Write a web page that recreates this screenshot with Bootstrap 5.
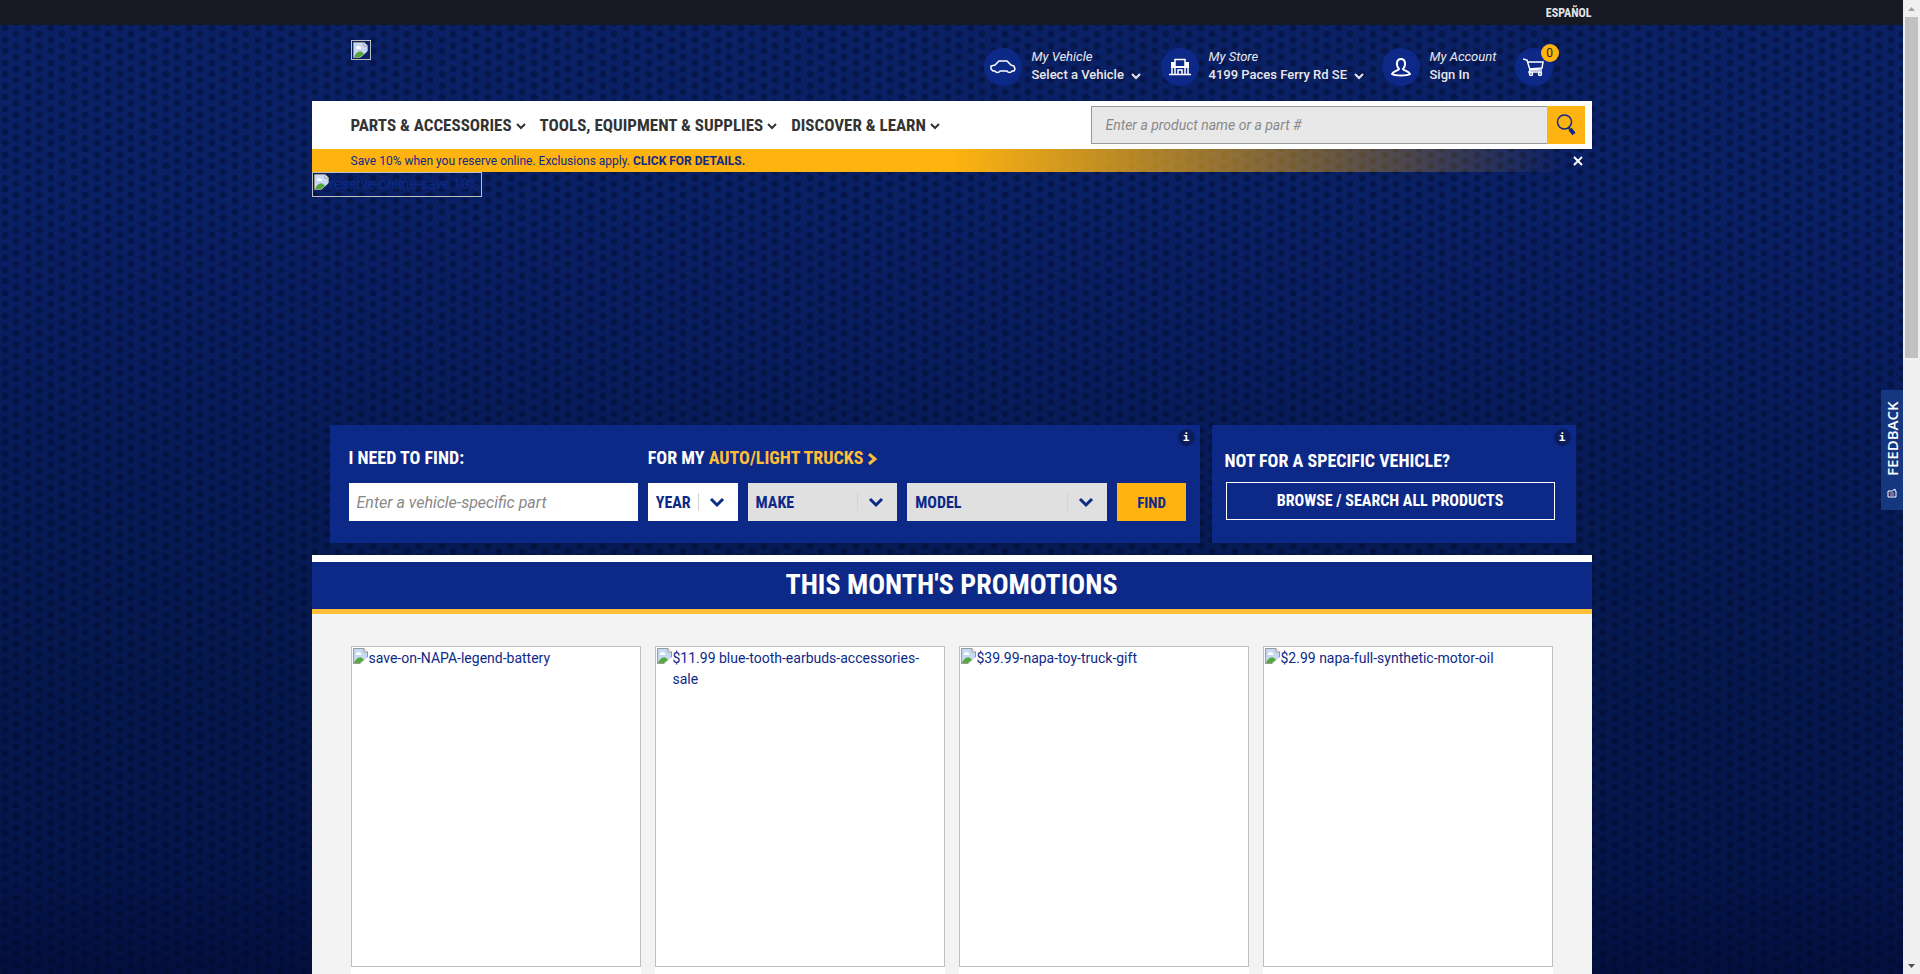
<!DOCTYPE html>
<html lang="en">
<head>
<meta charset="utf-8">
<meta name="viewport" content="width=device-width, initial-scale=1">
<title>Auto Parts</title>
<link href="https://cdn.jsdelivr.net/npm/bootstrap@5.3.0/dist/css/bootstrap.min.css" rel="stylesheet">
<style>
:root{--navy:#0d2988;--gold:#ffb310;--cond:"Roboto Condensed","Liberation Sans Narrow","Liberation Sans",sans-serif}
body{font-family:Roboto,"Liberation Sans",sans-serif;font-size:14px;line-height:21px;color:#333;overflow:hidden}
a{text-decoration:none;color:inherit}
.cond{font-family:var(--cond);font-weight:700}
.mesh{
  background:
    radial-gradient(circle at 5px 5px,rgba(2,8,36,.5) 0,rgba(2,8,36,.34) 3px,transparent 4px) 0 0/23px 23px,
    radial-gradient(circle at 5px 6px,rgba(2,8,36,.5) 0,rgba(2,8,36,.34) 3px,transparent 4px) 0 11px/23px 23px,
    radial-gradient(circle at 5px 5px,rgba(2,8,36,.5) 0,rgba(2,8,36,.34) 3px,transparent 4px) 11px 6px/23px 23px,
    radial-gradient(circle at 5px 6px,rgba(2,8,36,.5) 0,rgba(2,8,36,.34) 3px,transparent 4px) 11px 17px/23px 23px,
    linear-gradient(#0b2166 0,#0a2065 20%,#071b58 46%,#05184d 70%,#04154a 90%,#030f3e 100%)}
.wrap{width:100%;max-width:1280px;margin-left:auto;margin-right:auto}
.topbar{background:#161924;color:#e4e4e4;font-size:12px;height:25px;line-height:26px}
.masthead{padding:15px 39px 15px;height:76px;color:#e8e8ec;font-size:13px;line-height:18px}
.masthead b{font-weight:500}
.tools{padding-top:8px}
.tool-vehicle{width:177px}.tool-store{width:221px}.tool-account{width:133px}
.disc{width:38px;height:38px;border-radius:50%;background:var(--navy);color:#fff;flex:none}
.tool-text{margin-left:10px;white-space:nowrap}
.count{top:-4px;right:-6px;width:18px;height:18px;border-radius:50%;background:var(--gold);color:#222;font-size:12px;line-height:18px;text-align:center}
.mainnav{background:#fff;height:48px;padding:0 7px 0 39px}
.mainnav .menu{font-size:17px;color:#333;gap:14px}
.menu button{background:none;border:0;padding:0;font:inherit;color:inherit;white-space:nowrap}
.search{width:494px;height:38px}
.search input{flex:1;min-width:0;border:1px solid #999;border-right:0;background:#e8e8e8;padding:0 14px;font-style:italic}
.search input::placeholder,.partbox::placeholder{color:#888;opacity:1}
.search button{width:38px;border:0;padding:0;background:var(--gold);color:var(--navy)}
.notice{height:23px;line-height:24px;font-size:12px;color:var(--navy);padding:0 7px 0 39px;background:linear-gradient(90deg,var(--gold) 50%,rgba(255,179,16,0) 98%)}
.notice button{border:0;background:none;padding:0;color:#fff;width:14px}
.hero{height:253px}
.missing-banner{width:170px;height:25px;border:1px solid #c0c0c0;color:var(--navy);font-size:14px;padding:1px;white-space:nowrap}
.missing-logo{width:20px;height:20px;border:1px solid #c0c0c0}
.finder{display:grid;grid-template-columns:870fr 364fr;gap:12px;padding:0 16px 12px 18px}
.panel{background:var(--navy);color:#fff;height:118px;position:relative}
.panel h2{font-size:18px;line-height:24px;margin:0;font-family:var(--cond);font-weight:700;white-space:nowrap}
.gold{color:#ffbd38}
.find-grid{display:grid;grid-template-columns:290fr 90fr 150fr 200fr 70fr;column-gap:10px;row-gap:13px;padding:21px 13px 0 19px}
.find-grid h2:nth-child(2){grid-column:2/-1}
.find-grid input,.find-grid select,.find-grid button{height:38px;border:0;border-radius:0;min-width:0}
.partbox{background:#fff;font-style:italic;font-size:16px;padding:0 8px}
.pick{appearance:none;color:var(--navy);font-size:16px;padding:0 8px;opacity:1;
 background:#fff url("data:image/svg+xml,%3Csvg xmlns='http://www.w3.org/2000/svg' width='42' height='20'%3E%3Cpath d='M2.5 1v18' stroke='%23d4d4d4'/%3E%3Cpath d='M15 7l6 6 6-6' fill='none' stroke='%230d2988' stroke-width='3'/%3E%3C/svg%3E") right 0 center no-repeat}
.pick:disabled{background-color:#e0e0e0}
.find{background:var(--gold);color:var(--navy);font-size:15px;padding-top:4px}
.info{position:absolute;top:4px;right:5px;width:17px;height:17px;border:0;padding:0;border-radius:50%;background:#0a1d5e;color:#fff;font:700 11px/17px "DejaVu Sans Mono",monospace}
.anyvehicle{padding:24px 21px 0 13px}
.browse{display:block;height:38px;line-height:36px;border:1px solid #fff;text-align:center;font-size:16px;margin:9px 0 0 1px}
.promo-title{background:var(--navy);color:#fff;border-top:7px solid #fff;border-bottom:5px solid #ffbd38;height:59px;font-size:28px;line-height:46px;text-align:center;margin-top:0;margin-bottom:0}
.promos{background:#f3f3f3;padding:32px 39px 0}
.promo-grid{display:grid;grid-template-columns:repeat(4,1fr);gap:14px}
.promo{background:#fff;color:var(--navy);padding-bottom:80px}
.shot{height:321px;border:1px solid #c0c0c0;padding:1px}
.feedback{position:absolute;right:0;top:390px;width:22px;height:120px;background:#14377f;color:#fff;border:0;padding:0;font:600 15px/22px "Open Sans",sans-serif}
.turn{writing-mode:vertical-rl;transform:rotate(180deg);display:flex;align-items:center;gap:12px;width:22px;height:120px;padding-top:12px}
.scrollrail{flex:0 0 17px;background:#f0f0f0}
.thumb{width:13px;height:341px;background:#c1c1c1;margin-bottom:auto}
</style>
</head>
<body>
<svg width="0" height="0" class="position-absolute" aria-hidden="true">
<defs>
<symbol id="broken" viewBox="0 0 16 16"><path d="M1 .5h10L14.500 4v11.500H.5V.5z" fill="#c6d8f4" stroke="#999"/><path d="M11 .5V4h3.500" fill="#fff" stroke="#999"/><path d="M3 6c0-2 3-3 4-1 2 0 2 2 0 2H4C3 7 3 6 3 6z" fill="#fff"/><path d="M1 15c2-5 6-7 8-5l2 2-4 3z" fill="#54a839"/><path d="M7 16l9-8v8z" fill="var(--tear,#fff)"/></symbol>
<symbol id="chev" viewBox="0 0 10 8"><path d="M1 2l4 4 4-4" fill="none" stroke="currentColor" stroke-width="2"/></symbol>
</defs></svg>
<div class="d-flex vh-100 overflow-hidden">
<div class="mesh flex-grow-1 overflow-hidden position-relative">
  <div class="topbar"><div class="wrap text-end cond"><a href="#">ESPAÑOL</a></div></div>
  <header class="wrap masthead d-flex justify-content-between align-items-start">
    <a href="#" class="missing-logo d-flex p-0" aria-label="Home" style="--tear:#0b2166"><svg width="16" height="16" class="m-auto"><use href="#broken"/></svg></a>
    <div class="tools d-flex">
      <a href="#" class="tool-vehicle d-flex"><span class="disc d-flex align-items-center justify-content-center"><svg width="26" height="16" viewBox="0 0 26 16" fill="none" stroke="#fff" stroke-width="1.500"><path d="M5 12H3L1 10V7l4-1 4-4h8l4 4 3 1 1 3-1 2h-2c-1 2-4 2-5 0H10c-1 2-4 2-5 0z"/></svg></span><span class="tool-text"><i>My Vehicle</i><br><b>Select a Vehicle</b> <svg width="10" height="8" class="ms-1"><use href="#chev"/></svg></span></a>
      <a href="#" class="tool-store d-flex"><span class="disc d-flex align-items-center justify-content-center"><svg width="22" height="18" viewBox="0 0 22 18"><path d="M0 16.500h22M3 9v7M6 10v6M16 10v6M19 9v7M9 16v-4h4v4" fill="none" stroke="#fff" stroke-width="1.500"/><path d="M2 4h4v4h10V4h4v6H2z" fill="#fff"/><path d="M6 8V1.500h10V8" fill="none" stroke="#fff" stroke-width="1.500"/></svg></span><span class="tool-text"><i>My Store</i><br><b>4199 Paces Ferry Rd SE</b> <svg width="10" height="8" class="ms-1"><use href="#chev"/></svg></span></a>
      <a href="#" class="tool-account d-flex"><span class="disc d-flex align-items-center justify-content-center"><svg width="20" height="20" viewBox="0 0 20 20" fill="none" stroke="#fff" stroke-width="2"><path d="M8 12C5 9 5 2 10 2s5 7 2 10c1 2 6 2 7 5-3 2-15 2-18 0 1-3 6-3 7-5z"/></svg></span><span class="tool-text"><i>My Account</i><br><b>Sign In</b></span></a>
      <a href="#" class="disc position-relative d-flex align-items-center justify-content-center" aria-label="Cart"><svg width="22" height="20" viewBox="0 0 22 20" fill="none" stroke="#fff" stroke-width="1.500"><path d="M0 2l4 1 3 10h12M5 5h15l-1 6-13 1M7 13l-1 2h13"/><circle cx="8" cy="17" r="1.500"/><circle cx="17" cy="17" r="1.500"/></svg><span class="count position-absolute">0</span></a>
    </div>
  </header>
  <nav class="wrap mainnav d-flex align-items-center justify-content-between">
    <div class="menu cond d-flex">
      <button type="button">PARTS &amp; ACCESSORIES <svg width="10" height="8" class="align-middle"><use href="#chev"/></svg></button>
      <button type="button">TOOLS, EQUIPMENT &amp; SUPPLIES <svg width="10" height="8" class="align-middle"><use href="#chev"/></svg></button>
      <button type="button">DISCOVER &amp; LEARN <svg width="10" height="8" class="align-middle"><use href="#chev"/></svg></button>
    </div>
    <form class="search d-flex"><input type="text" aria-label="Search" placeholder="Enter a product name or a part #"><button type="button" aria-label="Search"><svg width="20" height="22" viewBox="0 0 20 22" fill="none" stroke="currentColor"><circle cx="8.500" cy="8" r="7" stroke-width="1.500"/><path d="M12 13l2 2" stroke-width="2"/><path d="M14 15l4 5" stroke-width="4"/></svg></button></form>
  </nav>
  <div class="wrap notice d-flex justify-content-between"><span>Save 10% when you reserve online. Exclusions apply. <a href="#" class="fw-bold">CLICK FOR DETAILS.</a></span><button type="button" aria-label="Close"><svg width="10" height="10" viewBox="0 0 10 10" class="d-block mx-auto"><path d="M1 1l8 8M9 1L1 9" stroke="#fff" stroke-width="2"/></svg></button></div>
  <div class="wrap hero"><a href="#" class="missing-banner d-flex align-items-start" style="--tear:#0b2166"><svg width="16" height="16" class="flex-shrink-0"><use href="#broken"/></svg><span>reserve-online-save 10%</span></a></div>
  <section class="wrap finder">
    <div class="panel">
      <form class="find-grid">
        <h2><label for="part">I NEED TO FIND:</label></h2>
        <h2>FOR MY <a href="#" class="gold">AUTO/LIGHT TRUCKS <svg width="9" height="12" viewBox="0 0 9 12"><path d="M1 1l6 5-6 5" fill="none" stroke="currentColor" stroke-width="3"/></svg></a></h2>
        <input id="part" class="partbox" type="text" placeholder="Enter a vehicle-specific part">
        <select class="pick cond" aria-label="Year"><option>YEAR</option></select>
        <select class="pick cond" aria-label="Make" disabled><option>MAKE</option></select>
        <select class="pick cond" aria-label="Model" disabled><option>MODEL</option></select>
        <button type="button" class="find cond">FIND</button>
      </form>
      <button type="button" class="info">i</button>
    </div>
    <div class="panel anyvehicle">
      <h2>NOT FOR A SPECIFIC VEHICLE?</h2>
      <a href="#" class="browse cond">BROWSE / SEARCH ALL PRODUCTS</a>
      <button type="button" class="info">i</button>
    </div>
  </section>
  <h1 class="wrap promo-title cond">THIS MONTH'S PROMOTIONS</h1>
  <main class="wrap promos"><div class="promo-grid">
    <a href="#" class="promo"><div class="shot d-flex"><svg width="16" height="16" class="flex-shrink-0"><use href="#broken"/></svg><span>save-on-NAPA-legend-battery</span></div></a>
    <a href="#" class="promo"><div class="shot d-flex"><svg width="16" height="16" class="flex-shrink-0"><use href="#broken"/></svg><span>$11.99 blue-tooth-earbuds-accessories-sale</span></div></a>
    <a href="#" class="promo"><div class="shot d-flex"><svg width="16" height="16" class="flex-shrink-0"><use href="#broken"/></svg><span>$39.99-napa-toy-truck-gift</span></div></a>
    <a href="#" class="promo"><div class="shot d-flex"><svg width="16" height="16" class="flex-shrink-0"><use href="#broken"/></svg><span>$2.99 napa-full-synthetic-motor-oil</span></div></a>
  </div></main>
  <button type="button" class="feedback"><span class="turn"><svg width="10" height="10" viewBox="0 0 10 10"><path d="M1 1h8v6H5L2 9V7H1z" fill="none" stroke="#fff"/><path d="M3 3h4M3 5h4" stroke="#e99"/></svg><span>FEEDBACK</span></span></button>
</div>
<div class="scrollrail d-flex flex-column align-items-center" aria-hidden="true">
  <svg width="17" height="17"><path d="M5 11l3.500-4 3.500 4z" fill="#a3a3a3"/></svg>
  <div class="thumb"></div>
  <svg width="17" height="17"><path d="M5 7l3.500 4L12 7z" fill="#505050"/></svg>
</div>
</div>
<script src="https://cdn.jsdelivr.net/npm/bootstrap@5.3.0/dist/js/bootstrap.bundle.min.js"></script>
</body>
</html>
